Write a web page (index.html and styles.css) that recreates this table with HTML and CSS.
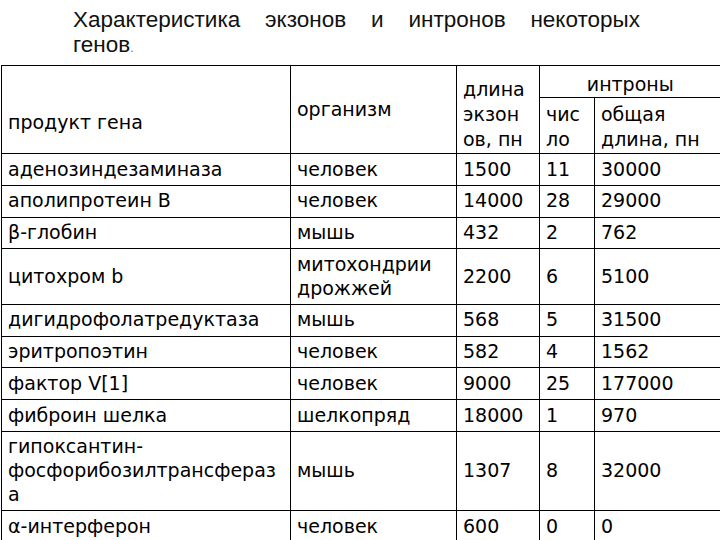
FILE: index.html
```html
<!DOCTYPE html>
<html lang="ru">
<head>
<meta charset="utf-8">
<title>Характеристика экзонов и интронов</title>
<link rel="stylesheet" href="styles.css">
</head>
<body>
<div class="title">
  <div class="title-line">Характеристика экзонов и интронов некоторых</div>
  <div class="title-last">генов<span class="dot">.</span></div>
</div>
<table class="genes">
  <colgroup>
    <col class="c1"><col class="c2"><col class="c3"><col class="c4"><col class="c5">
  </colgroup>
  <thead>
    <tr class="hr1">
      <th rowspan="2" class="prod">продукт гена</th>
      <th rowspan="2" class="org">организм</th>
      <th rowspan="2" class="len">длина<br>экзон<br>ов, пн</th>
      <th colspan="2" class="intr">интроны</th>
    </tr>
    <tr class="hr2">
      <th class="sub">чис<br>ло</th>
      <th class="sub">общая<br>длина, пн</th>
    </tr>
  </thead>
  <tbody>
    <tr><td>аденозиндезаминаза</td><td>человек</td><td>1500</td><td>11</td><td>30000</td></tr>
    <tr><td>аполипротеин B</td><td>человек</td><td>14000</td><td>28</td><td>29000</td></tr>
    <tr><td>β-глобин</td><td>мышь</td><td>432</td><td>2</td><td>762</td></tr>
    <tr><td>цитохром b</td><td>митохондрии<br>дрожжей</td><td>2200</td><td>6</td><td>5100</td></tr>
    <tr><td>дигидрофолатредуктаза</td><td>мышь</td><td>568</td><td>5</td><td>31500</td></tr>
    <tr><td>эритропоэтин</td><td>человек</td><td>582</td><td>4</td><td>1562</td></tr>
    <tr><td>фактор V[1]</td><td>человек</td><td>9000</td><td>25</td><td>177000</td></tr>
    <tr><td>фиброин шелка</td><td>шелкопряд</td><td>18000</td><td>1</td><td>970</td></tr>
    <tr><td>гипоксантин-<br>фосфорибозилтрансфераз<br>а</td><td>мышь</td><td>1307</td><td>8</td><td>32000</td></tr>
    <tr><td>α-интерферон</td><td>человек</td><td>600</td><td>0</td><td>0</td></tr>
  </tbody>
</table>
</body>
</html>
```
FILE: styles.css
```css
html, body {
  margin: 0;
  padding: 0;
  background: #fff;
  overflow: hidden;
}

body {
  width: 720px;
  height: 540px;
  color: #000;
}

.title {
  font-family: "Liberation Sans", Arial, sans-serif;
  font-size: 22.5px;
  line-height: 25px;
  width: 567px;
  margin: 7px 0 0 73px;
  color: #111;
}

.title-line {
  text-align: justify;
  text-align-last: justify;
}

.title .dot {
  font-size: 12px;
  color: #666;
}

.genes {
  margin: 4px 0 0 1px;
  border-collapse: collapse;
  table-layout: fixed;
  width: 719px;
  font-family: "DejaVu Sans", Verdana, sans-serif;
  font-size: 19px;
  line-height: 23.75px;
}

.genes col.c1 { width: 289px; }
.genes col.c2 { width: 166px; }
.genes col.c3 { width: 83px; }
.genes col.c4 { width: 55px; }
.genes col.c5 { width: 126px; }

.genes th,
.genes td {
  border: 1px solid #000;
  padding: 3.5px 6px;
  text-align: left;
  font-weight: normal;
  vertical-align: middle;
  white-space: nowrap;
  overflow: hidden;
}

.genes th {
  line-height: 25px;
}

.genes th:last-child,
.genes td:last-child {
  border-right: 0;
}

.genes .intr {
  text-align: center;
  padding-top: 6px;
  padding-bottom: 0;
}

.genes .prod {
  padding-top: 30px;
}

.genes .len,
.genes .sub {
  vertical-align: bottom;
  padding-top: 4px;
  padding-bottom: 1px;
}
```
